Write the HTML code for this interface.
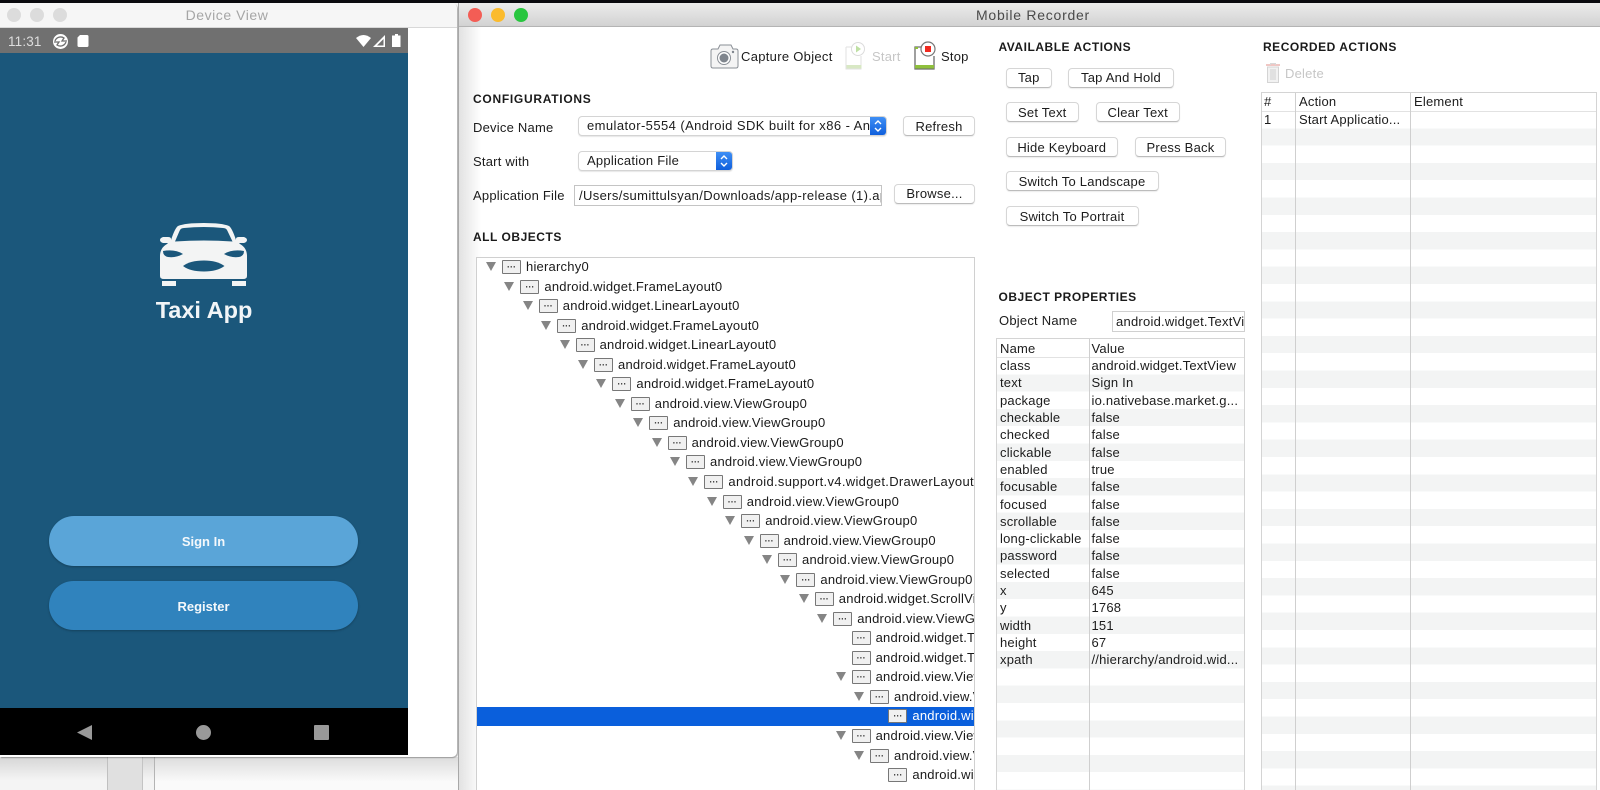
<!DOCTYPE html>
<html><head><meta charset="utf-8"><style>
html,body{margin:0;padding:0;width:1600px;height:790px;overflow:hidden;background:#f4f4f4}
body{position:relative;font-family:"Liberation Sans",sans-serif;font-size:13px;color:#1c1c1c}
.a{position:absolute;white-space:nowrap}
.t{position:absolute;white-space:nowrap;line-height:16px;letter-spacing:.22px}
.h{position:absolute;white-space:nowrap;line-height:16px;font-weight:bold;font-size:12px;letter-spacing:.52px;color:#1a1a1a}
.b{position:absolute;box-sizing:border-box;background:#fff;border:1px solid #d6d6d6;border-bottom-color:#bcbcbc;border-radius:4px;text-align:center;line-height:20px;letter-spacing:.22px;white-space:nowrap;box-shadow:0 1px 1px rgba(0,0,0,.08)}
.r{position:absolute;height:18px;width:900px}
.r i{position:absolute;left:0;top:4px;width:0;height:0;border-left:5px solid transparent;border-right:5px solid transparent;border-top:9px solid #858585}
.r b{position:absolute;left:16px;top:2px;box-sizing:border-box;width:19px;height:14px;border:1.5px solid #777;background:#f0f0f0;font-size:9px;line-height:12px;text-align:center;color:#333;border-radius:1px}
.r span{position:absolute;left:40px;top:0;line-height:18px;white-space:nowrap;letter-spacing:.22px;color:#1a1a1a}
.p{position:absolute;left:3px;line-height:17px;white-space:nowrap;letter-spacing:.2px}
.v{position:absolute;left:94.500px;line-height:17px;white-space:nowrap;letter-spacing:.2px}
.sel{position:absolute;box-sizing:border-box;background:#fff;border:1px solid #d4d4d4;border-radius:4px;box-shadow:0 1px 1px rgba(0,0,0,.1);overflow:hidden}
.arrow{position:absolute;right:0;top:0;bottom:0;width:16px;background:linear-gradient(#3f8ff5,#0f5fdc)}
</style></head><body>

<!-- backdrop -->
<div class="a" style="left:0;top:0;width:1600px;height:3px;background:#0b0b0f"></div>
<div class="a" style="left:0;top:757px;width:458px;height:33px;background:linear-gradient(#d6d6d6,#f4f4f4 70%)"></div>
<div class="a" style="left:155px;top:757px;width:303px;height:33px;background:linear-gradient(#dcdcdc,#fafafa 75%)"></div>
<div class="a" style="left:107px;top:757px;width:35px;height:33px;background:#e0e0e0;border-left:1px solid #c0c0c0;box-sizing:border-box"></div>
<div class="a" style="left:142px;top:757px;width:1px;height:33px;background:#c4c4c4"></div>
<div class="a" style="left:154px;top:757px;width:1px;height:33px;background:#b4b4b4"></div>

<!-- Device window -->
<div class="a" style="left:0;top:3px;width:457px;height:754px;background:#fff;border-radius:0 5px 5px 0;box-shadow:1px 1px 1px rgba(0,0,0,.3);overflow:hidden">
  <div class="a" style="left:0;top:0;width:457px;height:24px;background:#f6f6f6;border-bottom:1px solid #d8d8d8"></div>
  <div class="a" style="left:0;top:25px;width:408px;height:25px;background:#707070"></div>
  <div class="a" style="left:0;top:50px;width:408px;height:655px;background:#1b577b"></div>
  <div class="a" style="left:0;top:705px;width:408px;height:47px;background:#000"></div>
</div>
<div class="a" style="left:7px;top:8px;width:14px;height:14px;border-radius:50%;background:#dcdcdc;border:0"></div>
<div class="a" style="left:30px;top:8px;width:14px;height:14px;border-radius:50%;background:#dcdcdc"></div>
<div class="a" style="left:53px;top:8px;width:14px;height:14px;border-radius:50%;background:#dcdcdc"></div>
<div class="t" style="left:175px;top:7px;width:104px;text-align:center;color:#a6a6a6;font-size:14px;letter-spacing:.55px">Device View</div>

<!-- status bar -->
<div class="t" style="left:8px;top:34px;color:#dedede;font-size:13.5px;letter-spacing:.15px">11:31</div>
<svg class="a" style="left:0;top:28px" width="408" height="25" viewBox="0 28 408 25">
  <circle cx="60.500" cy="41.500" r="7.500" fill="#fff"/>
  <path d="M55 41a6 6 0 0 1 9-3l-2 3h5M66 42a6 6 0 0 1-9 3l2-3h-5" fill="none" stroke="#707070" stroke-width="1.300"/>
  <path d="M80 35h7a1.500 1.500 0 0 1 1.500 1.500v9a1.500 1.500 0 0 1-1.500 1.500h-8a1.500 1.500 0 0 1-1.500-1.500v-8z" fill="#fff"/>
  <path d="M356 38q7.500-6 15 0l-7.500 9z" fill="#fff"/>
  <path d="M385 35v12h-12zM383.500 39l-6.500 6.500h6.500z" fill="#fff" fill-rule="evenodd"/>
  <path d="M395 34h3v1.500h2.500v11.500h-8.500v-11.500h3z" fill="#fff"/>
</svg>

<!-- car -->
<svg class="a" style="left:155px;top:218px" width="98" height="74" viewBox="155 218 98 74">
  <path d="M203.700 223Q222 223 229 226Q232 228 236 240L240 244Q247 248 247 256L247 276Q247 279 243 279L164 279Q160 279 160 276L160 256Q160 248 167 244L171 240Q175 228 178 226Q185 223 203.700 223Z" fill="#f3f4f4"/>
  <path d="M175 241.500L179.500 231Q180.500 228 184 228Q204 226 223 228Q226.500 228 227.500 231L232.500 241.500Q204 239.500 175 241.500Z" fill="#1b577b"/>
  <path d="M163 237h5q3 0 3 2v4h-8q-3-1-3-3t3-3zM244 237h-5q-3 0-3 2v4h8q3-1 3-3t-3-3z" fill="#f3f4f4"/>
  <path d="M163 251Q175 249 183 254Q176 258 168 257Q163 256 163 251ZM244 251Q232 249 224 254Q231 258 239 257Q244 256 244 251Z" fill="#1b577b"/>
  <path d="M183 266Q190 260.500 204 260.500Q217 260.500 224.500 266Q217 271.500 204 271.500Q190 271.500 183 266Z" fill="#1b577b"/>
  <path d="M162 281h14v5h-14zM232 281h14v5h-14z" fill="#f3f4f4"/>
</svg>
<div class="a" style="left:130px;top:294.500px;width:148px;text-align:center;color:#f2f5f7;font-weight:bold;font-size:23.500px;line-height:30px">Taxi App</div>

<div class="a" style="left:49px;top:516px;width:309px;height:50px;border-radius:25px;background:#5aa5d8;box-shadow:0 1px 2px rgba(0,0,0,.25);text-align:center;line-height:51px;color:#f4f8fb;font-weight:bold;font-size:13px">Sign In</div>
<div class="a" style="left:49px;top:581px;width:309px;height:49px;border-radius:25px;background:#3083bd;box-shadow:0 1px 2px rgba(0,0,0,.25);text-align:center;line-height:51px;color:#f4f8fb;font-weight:bold;font-size:13px">Register</div>

<svg class="a" style="left:70px;top:720px" width="270" height="25" viewBox="70 720 270 25">
  <path d="M92 725v15l-15-7.500z" fill="#999"/>
  <circle cx="203.500" cy="732.500" r="7.500" fill="#999"/>
  <rect x="314" y="725" width="15" height="15" rx="1" fill="#999"/>
</svg>

<!-- Recorder window -->
<div class="a" style="left:458px;top:3px;width:1142px;height:787px;background:#fff;border-left:1px solid #a8a8a8;box-sizing:border-box"></div>
<div class="a" style="left:459px;top:3px;width:1141px;height:24px;background:linear-gradient(#ececec,#d2d2d2);border-bottom:1px solid #b4b4b4;box-sizing:border-box"></div>
<div class="a" style="left:459px;top:27px;width:22px;height:763px;background:linear-gradient(90deg,#e2e2e2,#fff)"></div>
<div class="a" style="left:468px;top:8px;width:14px;height:14px;border-radius:50%;background:#f35d55"></div>
<div class="a" style="left:491px;top:8px;width:14px;height:14px;border-radius:50%;background:#fbbb2d"></div>
<div class="a" style="left:514px;top:8px;width:14px;height:14px;border-radius:50%;background:#28c63f"></div>
<div class="t" style="left:976px;top:7px;color:#4a4a4a;font-size:14px;letter-spacing:.75px">Mobile Recorder</div>

<!-- toolbar -->
<svg class="a" style="left:708px;top:40px" width="270" height="34" viewBox="708 40 270 34">
  <path d="M713 49h5l2-4h11l2 4h3q2 0 2 2v15q0 2-2 2h-23q-2 0-2-2v-15q0-2 2-2z" fill="#f4f4f4" stroke="#8a8f96" stroke-width="1"/>
  <circle cx="724" cy="58" r="6.500" fill="#fff" stroke="#8a8f96"/>
  <circle cx="724" cy="58" r="4.500" fill="#7f858d"/>
  <circle cx="733" cy="52" r="1.200" fill="#7f858d"/>
  <path d="M846 47h8M846 47v22h15v-13" fill="none" stroke="#e2e2e2" stroke-width="1"/>
  <rect x="846.500" y="65" width="15" height="3.500" fill="#d8e8c4"/>
  <circle cx="858" cy="49" r="6.500" fill="#fff" stroke="#dcdcdc"/>
  <path d="M856 45.500l5 3.500-5 3.500z" fill="#bfe0a4"/>
  <path d="M925 47h-10v22h19v-13" fill="none" stroke="#6c6c6c" stroke-width="1.300"/>
  <rect x="915" y="65" width="19" height="3.500" fill="#8fc03c"/>
  <rect x="915" y="47" width="3" height="2" fill="#8fc03c"/>
  <circle cx="928" cy="49" r="7" fill="#fff" stroke="#777" stroke-width="1.200"/>
  <rect x="925" y="46" width="6" height="6" fill="#f02a20"/>
</svg>
<div class="t" style="left:741px;top:49px;letter-spacing:.3px">Capture Object</div>
<div class="t" style="left:872px;top:49px;color:#c6c6c6">Start</div>
<div class="t" style="left:941px;top:49px">Stop</div>

<!-- configurations -->
<div class="h" style="left:473px;top:91px;letter-spacing:.72px">CONFIGURATIONS</div>
<div class="t" style="left:473px;top:120px">Device Name</div>
<div class="sel" style="left:578px;top:116px;width:309px;height:20px"><div class="a" style="left:8px;top:0;width:285px;overflow:hidden;line-height:18px;letter-spacing:.42px">emulator-5554 (Android SDK built for x86 - Android 9)</div><div class="arrow"><svg width="16" height="18" style="display:block"><path d="M5 7l3-3 3 3M5 11l3 3 3-3" fill="none" stroke="#fff" stroke-width="1.400"/></svg></div></div>
<div class="b" style="left:903px;top:116px;width:72px;height:20px">Refresh</div>
<div class="t" style="left:473px;top:154px">Start with</div>
<div class="sel" style="left:578px;top:151px;width:155px;height:20px"><div class="a" style="left:8px;top:0;line-height:18px;letter-spacing:.25px">Application File</div><div class="arrow"><svg width="16" height="18" style="display:block"><path d="M5 7l3-3 3 3M5 11l3 3 3-3" fill="none" stroke="#fff" stroke-width="1.400"/></svg></div></div>
<div class="t" style="left:473px;top:188px">Application File</div>
<div class="a" style="left:574px;top:185px;width:308px;height:21px;box-sizing:border-box;border:1px solid #c4c4c4;background:#fff;overflow:hidden;line-height:20px;padding-left:4px;letter-spacing:.36px">/Users/sumittulsyan/Downloads/app-release (1).apk</div>
<div class="b" style="left:894px;top:184px;width:81px;height:20px;line-height:18px">Browse...</div>
<div class="h" style="left:473px;top:229px">ALL OBJECTS</div>

<!-- tree -->
<div class="a" style="left:476px;top:257px;width:499px;height:533px;box-sizing:border-box;border:1px solid #d0d0d0;border-bottom:0;overflow:hidden;background:#fff">
  <div class="a" style="left:0;top:449px;width:499px;height:19px;background:#0a5fdc"></div>
  <div class="r" style="left:9px;top:0px"><i></i><b>···</b><span>hierarchy0</span></div>
  <div class="r" style="left:27.400px;top:19.500px"><i></i><b>···</b><span>android.widget.FrameLayout0</span></div>
  <div class="r" style="left:45.800px;top:39px"><i></i><b>···</b><span>android.widget.LinearLayout0</span></div>
  <div class="r" style="left:64.200px;top:58.600px"><i></i><b>···</b><span>android.widget.FrameLayout0</span></div>
  <div class="r" style="left:82.600px;top:78.200px"><i></i><b>···</b><span>android.widget.LinearLayout0</span></div>
  <div class="r" style="left:101px;top:97.700px"><i></i><b>···</b><span>android.widget.FrameLayout0</span></div>
  <div class="r" style="left:119.400px;top:117.200px"><i></i><b>···</b><span>android.widget.FrameLayout0</span></div>
  <div class="r" style="left:137.800px;top:136.800px"><i></i><b>···</b><span>android.view.ViewGroup0</span></div>
  <div class="r" style="left:156.200px;top:156.300px"><i></i><b>···</b><span>android.view.ViewGroup0</span></div>
  <div class="r" style="left:174.600px;top:175.900px"><i></i><b>···</b><span>android.view.ViewGroup0</span></div>
  <div class="r" style="left:193px;top:195.400px"><i></i><b>···</b><span>android.view.ViewGroup0</span></div>
  <div class="r" style="left:211.400px;top:214.900px"><i></i><b>···</b><span style="letter-spacing:.32px">android.support.v4.widget.DrawerLayout0</span></div>
  <div class="r" style="left:229.800px;top:234.500px"><i></i><b>···</b><span>android.view.ViewGroup0</span></div>
  <div class="r" style="left:248.200px;top:254px"><i></i><b>···</b><span>android.view.ViewGroup0</span></div>
  <div class="r" style="left:266.600px;top:273.600px"><i></i><b>···</b><span>android.view.ViewGroup0</span></div>
  <div class="r" style="left:285px;top:293.100px"><i></i><b>···</b><span>android.view.ViewGroup0</span></div>
  <div class="r" style="left:303.400px;top:312.600px"><i></i><b>···</b><span>android.view.ViewGroup0</span></div>
  <div class="r" style="left:321.800px;top:332.200px"><i></i><b>···</b><span>android.widget.ScrollView0</span></div>
  <div class="r" style="left:340.200px;top:351.700px"><i></i><b>···</b><span>android.view.ViewGroup0</span></div>
  <div class="r" style="left:358.600px;top:371.300px"><b>···</b><span>android.widget.TextView0</span></div>
  <div class="r" style="left:358.600px;top:390.800px"><b>···</b><span>android.widget.TextView1</span></div>
  <div class="r" style="left:358.600px;top:410.300px"><i></i><b>···</b><span>android.view.ViewGroup0</span></div>
  <div class="r" style="left:377px;top:429.900px"><i></i><b>···</b><span>android.view.ViewGroup0</span></div>
  <div class="r" style="left:395.400px;top:449.400px"><b>···</b><span style="color:#fff">android.widget.TextView0</span></div>
  <div class="r" style="left:358.600px;top:469px"><i></i><b>···</b><span>android.view.ViewGroup1</span></div>
  <div class="r" style="left:377px;top:488.500px"><i></i><b>···</b><span>android.view.ViewGroup0</span></div>
  <div class="r" style="left:395.400px;top:508px"><b>···</b><span>android.widget.TextView0</span></div>
</div>

<!-- available actions -->
<div class="h" style="left:998.500px;top:39px">AVAILABLE ACTIONS</div>
<div class="b" style="left:1005.500px;top:68px;width:46.500px;height:20px;line-height:18px">Tap</div>
<div class="b" style="left:1068px;top:68px;width:106px;height:20px;line-height:18px">Tap And Hold</div>
<div class="b" style="left:1005.500px;top:102px;width:73.500px;height:20px">Set Text</div>
<div class="b" style="left:1095.500px;top:102px;width:84.500px;height:20px">Clear Text</div>
<div class="b" style="left:1005.500px;top:137px;width:112.500px;height:20px">Hide Keyboard</div>
<div class="b" style="left:1135px;top:137px;width:91px;height:20px">Press Back</div>
<div class="b" style="left:1005.500px;top:171px;width:153px;height:20px">Switch To Landscape</div>
<div class="b" style="left:1005.500px;top:206px;width:133px;height:20px">Switch To Portrait</div>

<!-- object properties -->
<div class="h" style="left:998.500px;top:289px">OBJECT PROPERTIES</div>
<div class="t" style="left:999px;top:313px">Object Name</div>
<div class="a" style="left:1112px;top:311px;width:133px;height:21px;box-sizing:border-box;border:1px solid #d0d0d0;background:#fff;overflow:hidden;line-height:20px;padding-left:3px;letter-spacing:.24px">android.widget.TextView</div>
<div class="a" style="left:996px;top:338px;width:249px;height:452px;box-sizing:border-box;border:1px solid #d4d4d4;border-bottom:0;background:#fff;overflow:hidden">
  <div class="a" style="left:0;top:18px;width:249px;height:440px;background:repeating-linear-gradient(#fff 0 17.300px,#f3f4f4 17.300px 34.600px)"></div>
  <div class="a" style="left:0;top:18px;width:249px;height:1px;background:#e2e2e2"></div>
  <div class="a" style="left:92px;top:0;width:1px;height:452px;background:#cfcfcf"></div>
  <div class="p" style="top:1px">Name</div><div class="v" style="top:1px">Value</div>
  <div class="p" style="top:18px">class</div><div class="v" style="top:18px">android.widget.TextView</div>
  <div class="p" style="top:35px">text</div><div class="v" style="top:35px">Sign In</div>
  <div class="p" style="top:52.500px">package</div><div class="v" style="top:52.500px">io.nativebase.market.g...</div>
  <div class="p" style="top:70px">checkable</div><div class="v" style="top:70px">false</div>
  <div class="p" style="top:87px">checked</div><div class="v" style="top:87px">false</div>
  <div class="p" style="top:104.500px">clickable</div><div class="v" style="top:104.500px">false</div>
  <div class="p" style="top:122px">enabled</div><div class="v" style="top:122px">true</div>
  <div class="p" style="top:139px">focusable</div><div class="v" style="top:139px">false</div>
  <div class="p" style="top:156.500px">focused</div><div class="v" style="top:156.500px">false</div>
  <div class="p" style="top:173.500px">scrollable</div><div class="v" style="top:173.500px">false</div>
  <div class="p" style="top:191px">long-clickable</div><div class="v" style="top:191px">false</div>
  <div class="p" style="top:208px">password</div><div class="v" style="top:208px">false</div>
  <div class="p" style="top:225.500px">selected</div><div class="v" style="top:225.500px">false</div>
  <div class="p" style="top:243px">x</div><div class="v" style="top:243px">645</div>
  <div class="p" style="top:260px">y</div><div class="v" style="top:260px">1768</div>
  <div class="p" style="top:277.500px">width</div><div class="v" style="top:277.500px">151</div>
  <div class="p" style="top:295px">height</div><div class="v" style="top:295px">67</div>
  <div class="p" style="top:312px">xpath</div><div class="v" style="top:312px">//hierarchy/android.wid...</div>
</div>

<!-- recorded actions -->
<div class="h" style="left:1263px;top:39px">RECORDED ACTIONS</div>
<svg class="a" style="left:1265px;top:62px" width="17" height="22" viewBox="0 0 17 22">
  <path d="M1 3h14" stroke="#eab4b0" stroke-width="1.500"/>
  <path d="M5.500 3V1.500h5V3" fill="none" stroke="#d8d8d8"/>
  <path d="M2.500 5h11v15.500h-11z" fill="#f2f2f2" stroke="#d4d4d4"/>
  <path d="M6 7v11M8 7v11M10 7v11" stroke="#d0d0d0"/>
</svg>
<div class="t" style="left:1285px;top:66px;color:#c6c6c6">Delete</div>
<div class="a" style="left:1261px;top:92px;width:336px;height:698px;box-sizing:border-box;border:1px solid #d4d4d4;border-bottom:0;background:#fff;overflow:hidden">
  <div class="a" style="left:0;top:18px;width:336px;height:690px;background:repeating-linear-gradient(#fff 0 17.300px,#f3f4f4 17.300px 34.600px)"></div>
  <div class="a" style="left:0;top:18px;width:336px;height:1px;background:#e2e2e2"></div>
  <div class="a" style="left:33px;top:0;width:1px;height:698px;background:#cfcfcf"></div>
  <div class="a" style="left:148px;top:0;width:1px;height:698px;background:#cfcfcf"></div>
  <div class="p" style="top:0;left:2px">#</div>
  <div class="p" style="top:0;left:37px">Action</div>
  <div class="p" style="top:0;left:152px">Element</div>
  <div class="p" style="top:18px;left:2px">1</div>
  <div class="p" style="top:18px;left:37px">Start Applicatio...</div>
</div>
</body></html>
